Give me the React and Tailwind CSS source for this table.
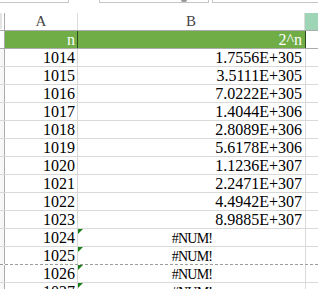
const ROWS = [
  ['1014', '1.7556E+305'],
  ['1015', '3.5111E+305'],
  ['1016', '7.0222E+305'],
  ['1017', '1.4044E+306'],
  ['1018', '2.8089E+306'],
  ['1019', '5.6178E+306'],
  ['1020', '1.1236E+307'],
  ['1021', '2.2471E+307'],
  ['1022', '4.4942E+307'],
  ['1023', '8.9885E+307'],
  ['1024', '#NUM!'],
  ['1025', '#NUM!'],
  ['1026', '#NUM!'],
  ['1027', '#NUM!'],
]

function ErrorFlag() {
  return (
    <svg width="5" height="5" viewBox="0 0 5 5" className="absolute left-0 top-0">
      <polygon points="0,0 5,0 0,5" fill="#1a7f1a" />
    </svg>
  )
}

function DataRow({ n, value, dashed }) {
  const isError = value.startsWith('#')
  return (
    <div
      className={
        'flex h-[18px] shrink-0 ' +
        (dashed ? 'border-b border-dashed border-[#9c9c9c]' : 'border-b border-[#d9d9d9]')
      }
    >
      <div className="w-[5px] shrink-0 border-r border-[#ababab] bg-[#f7f7f7]" />
      <div className="w-[73px] shrink-0 border-r border-[#d9d9d9] flex items-end justify-end pr-[2px]">
        <span className="leading-none">{n}</span>
      </div>
      <div
        className={
          'relative w-[228px] shrink-0 border-r border-[#d9d9d9] flex items-end ' +
          (isError ? 'justify-center pl-[1px]' : 'justify-end pr-[3px]')
        }
      >
        {isError && <ErrorFlag />}
        <span className={'leading-none ' + (isError ? 'tracking-[-0.8px] text-[14px]' : '')}>{value}</span>
      </div>
      <div className="flex-1" />
    </div>
  )
}

export default function App() {
  return (
    <div
      className="w-[318px] h-[289px] overflow-hidden bg-white text-black text-[16px] flex flex-col"
      style={{ fontFamily: '"Liberation Serif", "DejaVu Serif", serif' }}
    >
      {/* toolbar remnants */}
      <div className="flex h-[3px] shrink-0">
        <div className="w-[69px] border-r border-b border-[#c6c6c6]" />
        <div className="w-[30px]" />
        <div className="relative w-[110px] border-x border-b border-[#c6c6c6]">
          <div className="absolute left-[81px] top-0 w-[6px] h-[2px] rounded-b bg-[#9a9a9a]" />
        </div>
        <div className="w-[3px]" />
        <div className="flex-1 border-l border-b border-[#c6c6c6]" />
      </div>
      <div className="h-[10px] shrink-0" />

      {/* column headers */}
      <div className="flex h-[18px] shrink-0 border-b border-[#ababab] text-[#444] text-[15px]">
        <div className="w-[5px] shrink-0 border-r border-[#ababab] flex">
          <div className="w-[2px] h-[16px] bg-[#e4e4e4]" />
        </div>
        <div className="w-[73px] shrink-0 border-r border-[#dcdcdc] flex items-center justify-center">A</div>
        <div className="w-[227px] shrink-0 border-r border-[#dcdcdc] flex items-center justify-center">B</div>
        <div className="flex-1 bg-[#9fd5b7]" />
      </div>

      {/* green header row */}
      <div className="flex h-[18px] shrink-0 border-b border-[#ababab] text-white">
        <div className="w-[5px] shrink-0 border-r border-[#ababab]" />
        <div className="w-[73px] shrink-0 border-r border-[#2f4a22] bg-[#70ad47] flex items-end justify-end pr-[2px]">
          <span className="leading-none">n</span>
        </div>
        <div className="w-[228px] shrink-0 border-r border-[#2f4a22] bg-[#70ad47] flex items-end justify-end pr-[3px]">
          <span className="leading-none">2^n</span>
        </div>
        <div className="flex-1" />
      </div>

      {ROWS.map(([n, v]) => (
        <DataRow key={n} n={n} value={v} dashed={n === '1025'} />
      ))}
    </div>
  )
}
